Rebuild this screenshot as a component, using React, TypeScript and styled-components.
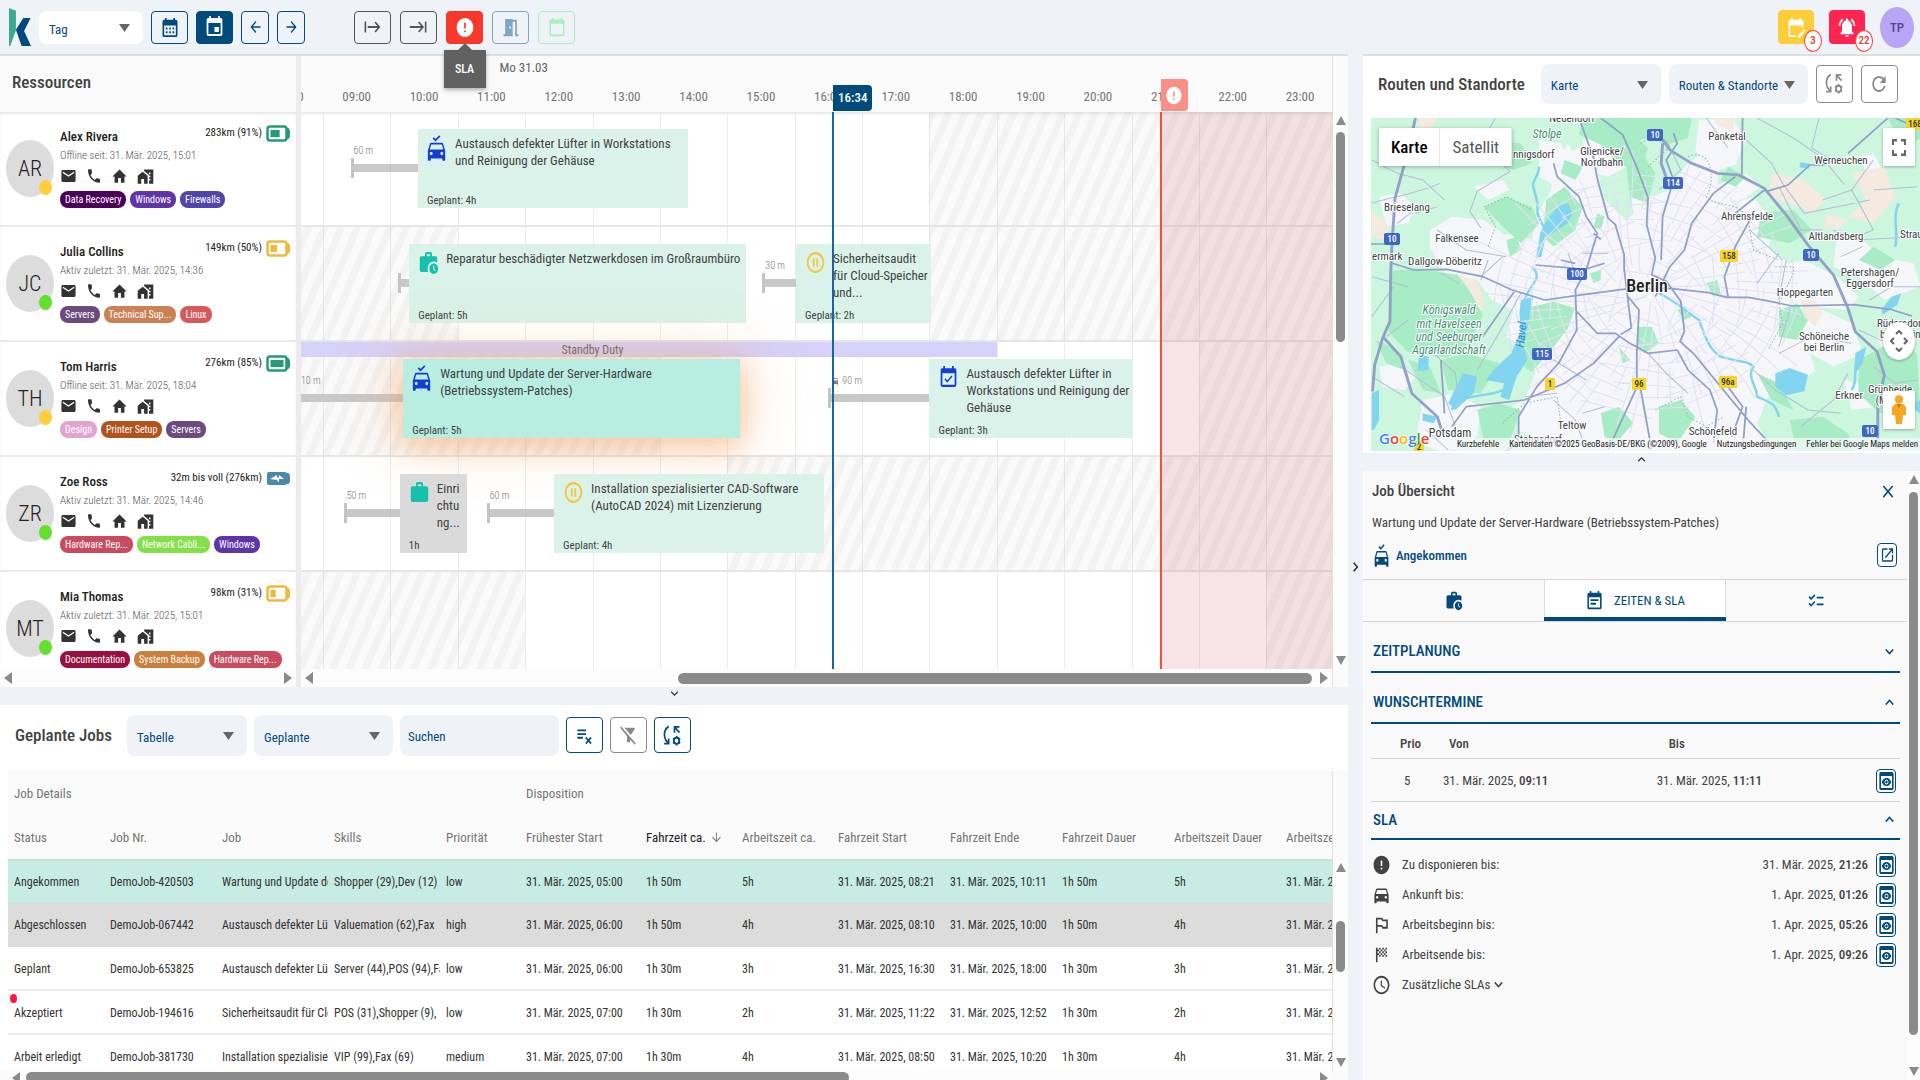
import React from 'react';
import styled, { createGlobalStyle, css } from 'styled-components';
import {
  MdAccessTime, MdArrowBack, MdArrowDownward, MdArrowForward, MdCalendarMonth, MdCalendarToday, MdChecklist,
  MdClose, MdDirectionsCar, MdEditCalendar, MdEmail, MdError, MdEvent, MdEventAvailable, MdEventNote, MdExpandLess,
  MdExpandMore, MdFilterAltOff, MdHome, MdHomeWork, MdKeyboardTab, MdChevronRight, MdMeetingRoom,
  MdNotificationsActive, MdOpenInNew, MdOutlinedFlag, MdPauseCircleOutline, MdPhone, MdPlaylistRemove, MdPreview,
  MdRefresh, MdSportsScore, MdStart, MdWork, MdWorkHistory, MdFullscreen,
} from 'react-icons/md';

/* ---------- tokens ---------- */
const navy = '#004a7c';
const shell = '#eff3f8';
const ink = '#424242';
const muted = '#757575';
const font = '"Roboto Condensed", Roboto, "Liberation Sans", sans-serif';

const Global = createGlobalStyle`
  *, *::before, *::after { box-sizing: border-box; }
  body { margin: 0; background: ${shell}; font-family: ${font}; font-size: 13px; color: ${ink}; }
  button, input, select { font: inherit; color: inherit; }
  h1, h2, h3, p, ul { margin: 0; padding: 0; }
  ul { list-style: none; }
`;

/* ---------- shell ---------- */
const Shell = styled.div`
  display: grid;
  grid-template-rows: 54px minmax(0, 1fr);
  height: 100vh;
  overflow: hidden;
`;
const TopBar = styled.header`
  display: flex;
  align-items: center;
  justify-content: space-between;
  padding: 0 6px 0 9px;
  background: ${shell};
  z-index: 5;
`;
const BarGroup = styled.div<{ $gap?: number }>`
  display: flex;
  align-items: center;
  gap: ${p => p.$gap ?? 9}px;
`;
const Main = styled.main`
  display: grid;
  grid-template-columns: minmax(0, 1348fr) 15px minmax(0, 557fr);
  min-height: 0;
`;
const LeftColumn = styled.div`
  display: grid;
  grid-template-rows: minmax(0, 633fr) 18px minmax(0, 375fr);
  min-height: 0;
`;
const RightColumn = styled.div`
  display: grid;
  grid-template-rows: minmax(0, 399fr) 18px minmax(0, 609fr);
  min-height: 0;
`;
const Splitter = styled.button<{ $row?: boolean }>`
  display: flex;
  align-items: center;
  justify-content: center;
  border: 0;
  padding: ${p => (p.$row ? '0 0 6px' : '0')};
  background: ${shell};
  color: #333;
`;

/* ---------- controls ---------- */
const IconButton = styled.button<{ $w?: number; $h?: number; $tone?: string; $fill?: string }>`
  position: relative;
  display: flex;
  align-items: center;
  justify-content: center;
  flex: none;
  width: ${p => p.$w ?? 37}px;
  height: ${p => p.$h ?? 33}px;
  padding: 0;
  border: 1px solid ${p => p.$fill ?? p.$tone ?? navy};
  border-radius: 4px;
  background: ${p => p.$fill ?? 'transparent'};
  color: ${p => (p.$fill ? '#fff' : p.$tone ?? navy)};
`;
const Tooltip = styled.span`
  position: absolute;
  top: 38px;
  left: 50%;
  width: 42px;
  margin-left: -21px;
  line-height: 38px;
  background: #616161;
  color: #fff;
  font-size: 12px;
  font-weight: 500;
  text-align: center;
  box-shadow: 0 2px 4px rgba(0, 0, 0, 0.3);
  &::before {
    content: '';
    position: absolute;
    left: 14px;
    top: -7px;
    border: 7px solid transparent;
    border-top: 0;
    border-bottom-color: #616161;
  }
`;
const Count = styled.span`
  position: absolute;
  right: -9px;
  bottom: -9px;
  width: 18px;
  height: 22px;
  border: 1px solid #f44336;
  border-radius: 50%;
  background: #fff;
  color: #e53935;
  font-size: 11px;
  font-weight: 500;
  line-height: 20px;
  text-align: center;
`;
const UserButton = styled.button`
  width: 34px;
  height: 41px;
  padding: 0;
  border: 0;
  border-radius: 50%;
  background: #b9a5f5;
  color: #5b4394;
  font-size: 13px;
  font-weight: 500;
`;
const SelectBox = styled.label<{ $w: number; $h: number; $bg?: string }>`
  position: relative;
  display: flex;
  flex: none;
  width: ${p => p.$w}px;
  height: ${p => p.$h}px;
  border-radius: 8px;
  background: ${p => p.$bg ?? shell};
  color: ${navy};
  svg { position: absolute; right: 13px; top: 50%; margin-top: -3px; pointer-events: none; }
`;
const NativeSelect = styled.select`
  appearance: none;
  width: 100%;
  border: 0;
  border-radius: 8px;
  padding: 4px 24px 0 10px;
  background: transparent;
  font-size: 13px;
`;
const SearchBox = styled.input`
  width: 159px;
  height: 41px;
  padding: 2px 8px 0;
  border: 0;
  border-radius: 8px;
  background: ${shell};
  &::placeholder { color: ${navy}; opacity: 1; }
`;
const Title = styled.h2<{ $size?: number }>`
  font-size: ${p => p.$size ?? 17}px;
  font-weight: 500;
  color: ${ink};
  white-space: nowrap;
`;

/* ---------- scroll bars ---------- */
const barTone = '#8a8a8a';
const Track = styled.div<{ $axis: 'x' | 'y' }>`
  display: flex;
  flex-direction: ${p => (p.$axis === 'x' ? 'row' : 'column')};
  align-items: center;
  min-width: 0;
  min-height: 0;
  background: #fcfcfc;
  ${p => p.$axis === 'x' ? css`height: 18px; padding: 0 4px;` : css`width: 100%; height: 100%; padding: 4px 0;`}
  svg { flex: none; }
`;
const Gap = styled.span<{ $grow: number }>`
  flex: ${p => p.$grow} 0 0;
`;
const Thumb = styled.span<{ $grow: number; $axis: 'x' | 'y' }>`
  flex: ${p => p.$grow} 0 0;
  border-radius: 6px;
  background: ${barTone};
  ${p => (p.$axis === 'x' ? css`height: 11px;` : css`width: 9px;`)}
`;
const arrows = { left: 'M8 0v12L0 6z', right: 'M0 0v12l8-6z', up: 'M0 9h10L5 0z', down: 'M0 0h10L5 9z' };
function ScrollArrow({ dir }: { dir: keyof typeof arrows }) {
  const wide = dir === 'up' || dir === 'down';
  return <svg width={wide ? 10 : 8} height={wide ? 9 : 12} fill={barTone}><path d={arrows[dir]} /></svg>;
}
function Bar({ axis, parts }: { axis: 'x' | 'y'; parts?: [number, number, number] }) {
  const p = parts ?? [1, 0, 0];
  return (
    <Track $axis={axis} aria-hidden>
      <ScrollArrow dir={axis === 'x' ? 'left' : 'up'} />
      <Gap $grow={p[0]} />
      {p[1] > 0 && <Thumb $axis={axis} $grow={p[1]} />}
      <Gap $grow={p[2]} />
      <ScrollArrow dir={axis === 'x' ? 'right' : 'down'} />
    </Track>
  );
}

/* ---------- icons ---------- */
type Glyph = React.ComponentType<any>;
function Icon({ as: G, w, h, color }: { as: Glyph; w: number; h: number; color?: string }) {
  return <G preserveAspectRatio="none" style={{ width: w, height: h, color, flex: 'none', display: 'block' }} />;
}
const CarCheck: Glyph = props => (
  <svg viewBox="0 0 24 30" fill="currentColor" {...props}>
    <path
      transform="translate(-2.6 2.5) scale(1.22 1.3)"
      fillRule="evenodd"
      d="M18.92 6.010C18.720 5.420 18.160 5 17.500 5h-11c-.66 0-1.210.42-1.420 1.010L3 12v8c0 .55.45 1 1 1h1c.55 0 1-.45 1-1v-1h12v1c0 .55.45 1 1 1h1c.55 0 1-.45 1-1v-8l-2.080-5.990zM6.500 16c-.83 0-1.500-.67-1.500-1.500S5.670 13 6.500 13s1.500.67 1.500 1.500S7.330 16 6.500 16zm11 0c-.83 0-1.500-.67-1.500-1.500s.67-1.500 1.500-1.500 1.500.67 1.500 1.500-.67 1.500-1.500 1.500zM5 11l1.500-4.500h11L19 11H5z"
    />
    <path d="M7.800 3.300l3 2.700 5.400-5" fill="none" stroke="currentColor" strokeWidth="2.200" />
  </svg>
);
const SyncSettings: Glyph = props => (
  <svg viewBox="0 0 24 24" fill="none" stroke="currentColor" strokeWidth="2" {...props}>
    <path d="M8 2.500C4 5 2.500 8.500 3 12.500c.3 3 1.800 5 4 7M2.500 20.500H8V15" />
    <path d="M15 9V3h6M15.500 3.500 21 9" />
    <circle cx="17.500" cy="17.500" r="3.200" />
    <path d="M17.500 12.500v2M17.500 20.500v2M13.200 15l1.700 1M20.100 19l1.700 1M13.200 20l1.700-1M20.100 16l1.700-1" />
  </svg>
);
const Caret = () => <svg width="11" height="8" fill="#666"><path d="M0 0h11L5.500 8z" /></svg>;
const Logo = () => (
  <svg width="22" height="38" viewBox="0 0 54 94" preserveAspectRatio="none" role="img" aria-label="k">
    <path d="M53 25H35L17 54l14 40h23L37 57z" fill={navy} />
    <path d="M0 0l17 7v48L3 94H0z" fill="#3fa98f" />
  </svg>
);
function Battery({ tone, level }: { tone: string; level: number }) {
  return (
    <svg width="24" height="17" viewBox="0 0 24 17" aria-hidden>
      <path d="M21 3h1.500l1.500 2.500v6l-1.500 2.500H21z" fill={tone} />
      {level < 0 ? (
        <>
          <rect x="1" y="2" width="20" height="13" rx="2" fill={tone} />
          <path d="M4 9l7-4v2.500h2V5l5 4h-5v3.500L11 10z" fill="#fff" />
        </>
      ) : (
        <>
          <rect x="1.500" y="1.500" width="19" height="14" rx="2.500" fill="#fff" stroke={tone} strokeWidth="2.500" />
          <rect x="4.500" y="5" width={13 * level} height="7" fill={tone} />
        </>
      )}
    </svg>
  );
}

/* ---------- resources ---------- */
const Planner = styled.section`
  display: grid;
  grid-template-columns: 296px 5px minmax(0, 1fr) 16px;
  min-height: 0;
  border-top: 2px solid #dcdfe3;
  background: #fff;
`;
const Pane = styled.div`
  display: grid;
  grid-template-rows: 56px minmax(0, 1fr) 18px;
  min-width: 0;
  min-height: 0;
`;
const PaneHead = styled.div`
  position: relative;
  display: flex;
  align-items: center;
  padding: 0 12px 4px;
  background: #fafafa;
  overflow: hidden;
`;
const PaneBody = styled.div`
  position: relative;
  overflow: hidden;
  box-shadow: inset 0 3px 3px -1px rgba(0, 0, 0, 0.1);
`;
const Divider = styled.div`
  background: #ececec;
`;
const ResourceRow = styled.li`
  display: flex;
  gap: 6px;
  height: 115px;
  padding: 16px 6px 0;
  border-bottom: 2px solid #ebebeb;
`;
const Avatar = styled.div`
  position: relative;
  flex: none;
  width: 48px;
  height: 57px;
  margin-top: 12px;
  border-radius: 50%;
  background: #dcdcdc;
  color: #222;
  font-size: 22px;
  font-weight: 300;
  line-height: 57px;
  text-align: center;
`;
const Presence = styled.span<{ $tone: string }>`
  position: absolute;
  right: 2px;
  bottom: 2px;
  width: 13px;
  height: 15px;
  border-radius: 50%;
  background: ${p => p.$tone};
`;
const Info = styled.div`
  flex: 1;
  min-width: 0;
`;
const NameLine = styled.div`
  display: flex;
  justify-content: space-between;
  height: 18px;
  line-height: 18px;
`;
const Name = styled.span`
  font-weight: 500;
  color: #212121;
`;
const Range = styled.span`
  display: flex;
  align-items: center;
  gap: 4px;
  height: 18px;
  margin-top: -4px;
  font-size: 11px;
  color: #212121;
`;
const Seen = styled.p`
  height: 19px;
  font-size: 11px;
  font-weight: 300;
  line-height: 19px;
  color: #555;
`;
const Contacts = styled.div`
  display: flex;
  align-items: center;
  gap: 9px;
  height: 22px;
`;
const Contact = styled.a`
  color: #333;
`;
const Chips = styled.ul`
  display: flex;
  gap: 4px;
  margin-top: 4px;
`;
const Chip = styled.li<{ $bg: string }>`
  height: 17px;
  padding: 0 5px;
  border-radius: 8px;
  background: ${p => p.$bg};
  color: #fff;
  font-size: 10px;
  line-height: 17px;
  white-space: nowrap;
`;

const online = '#62e02c';
const away = '#ffce3a';
const resources = [
  { id: 'AR', name: 'Alex Rivera', seen: 'Offline seit: 31. Mär. 2025, 15:01', dot: away, range: '283km (91%)', tone: '#229b76', level: 0.7,
    chips: [['Data Recovery', '#4a0057'], ['Windows', '#5e35a8'], ['Firewalls', '#5145ad']] },
  { id: 'JC', name: 'Julia Collins', seen: 'Aktiv zuletzt: 31. Mär. 2025, 14:36', dot: online, range: '149km (50%)', tone: '#efb93e', level: 0.5,
    chips: [['Servers', '#6b4a80'], ['Technical Sup...', '#cc8152'], ['Linux', '#d75a5a']] },
  { id: 'TH', name: 'Tom Harris', seen: 'Offline seit: 31. Mär. 2025, 18:04', dot: away, range: '276km (85%)', tone: '#229b76', level: 1,
    chips: [['Design', '#e2a3cf'], ['Printer Setup', '#b3521b'], ['Servers', '#6b4a80']] },
  { id: 'ZR', name: 'Zoe Ross', seen: 'Aktiv zuletzt: 31. Mär. 2025, 14:46', dot: online, range: '32m bis voll (276km)', tone: '#4c87ac', level: -1,
    chips: [['Hardware Rep...', '#c94b60'], ['Network Cabli...', '#84e04a'], ['Windows', '#5e35a8']] },
  { id: 'MT', name: 'Mia Thomas', seen: 'Aktiv zuletzt: 31. Mär. 2025, 15:01', dot: online, range: '98km (31%)', tone: '#efb93e', level: 0.4,
    chips: [['Documentation', '#990f3d'], ['System Backup', '#cc7f3c'], ['Hardware Rep...', '#c94b60']] },
];

function Resources() {
  return (
    <Pane>
      <PaneHead><Title>Ressourcen</Title></PaneHead>
      <PaneBody>
        <ul>
          {resources.map(r => (
            <ResourceRow key={r.id}>
              <Avatar>{r.id}<Presence $tone={r.dot} /></Avatar>
              <Info>
                <NameLine>
                  <Name>{r.name}</Name>
                  <Range>{r.range}<Battery tone={r.tone} level={r.level} /></Range>
                </NameLine>
                <Seen>{r.seen}</Seen>
                <Contacts>
                  <Contact href="#mail" aria-label="E-Mail"><Icon as={MdEmail} w={17} h={18} /></Contact>
                  <Contact href="#phone" aria-label="Telefon"><Icon as={MdPhone} w={16} h={18} /></Contact>
                  <Contact href="#home" aria-label="Zuhause"><Icon as={MdHome} w={17} h={19} /></Contact>
                  <Contact href="#site" aria-label="Standort"><Icon as={MdHomeWork} w={17} h={19} /></Contact>
                </Contacts>
                <Chips>{r.chips.map(([t, c]) => <Chip key={t} $bg={c}>{t}</Chip>)}</Chips>
              </Info>
            </ResourceRow>
          ))}
        </ul>
      </PaneBody>
      <Bar axis="x" />
    </Pane>
  );
}

/* ---------- timeline ---------- */
const DAY_START = 8.674;
const DAY_SPAN = 15.3;
const at = (h: number) => `${((h - DAY_START) / DAY_SPAN) * 100}%`;
const span = (h: number) => `${(h / DAY_SPAN) * 100}%`;

const DayLabel = styled.span`
  position: absolute;
  top: 4px;
  line-height: 16px;
  color: #616161;
`;
const HourLabel = styled.span`
  position: absolute;
  bottom: 7px;
  line-height: 16px;
  text-align: center;
  color: ${muted};
`;
const HourLine = styled.span`
  position: absolute;
  top: 0;
  bottom: 0;
  width: 1px;
  background: #ececec;
`;
const NowBadge = styled.span`
  position: absolute;
  bottom: 1px;
  height: 26px;
  padding: 0 5px;
  border-radius: 0 4px 4px 0;
  background: ${navy};
  color: #fff;
  font-weight: 500;
  line-height: 25px;
`;
const SlaBadge = styled.span`
  position: absolute;
  bottom: 1px;
  display: flex;
  align-items: center;
  justify-content: center;
  width: 27px;
  height: 32px;
  border-radius: 0 4px 4px 0;
  background: #f98f87;
`;
const Marker = styled.span<{ $tone: string; $w: number }>`
  position: absolute;
  top: 0;
  bottom: 0;
  width: ${p => p.$w}px;
  background: ${p => p.$tone};
  z-index: 2;
`;
const SlaZone = styled.span`
  position: absolute;
  top: 0;
  right: 0;
  bottom: 0;
  background: rgba(190, 50, 44, 0.13);
`;
const Lane = styled.div`
  position: relative;
  height: 115px;
  border-bottom: 2px solid #e6e6e6;
`;
const Blocked = styled.span`
  position: absolute;
  top: 0;
  bottom: 0;
  background: repeating-linear-gradient(113deg, rgba(160, 160, 160, 0.13) 0 7px, rgba(160, 160, 160, 0.05) 7px 15px);
`;
const Standby = styled.span`
  position: absolute;
  top: 0;
  height: 15px;
  background: #d6d1f9;
  color: #616161;
  font-size: 12px;
  line-height: 16px;
  text-align: center;
`;
const Travel = styled.span`
  position: absolute;
  top: 52px;
  height: 8px;
  background: #c8c8c8;
  &::before {
    content: '';
    position: absolute;
    left: 0;
    top: -6px;
    width: 3px;
    height: 20px;
    background: #c4c4c4;
  }
`;
const TravelLabel = styled.span`
  position: absolute;
  left: 3px;
  bottom: 14px;
  display: flex;
  align-items: center;
  gap: 3px;
  font-size: 10px;
  font-weight: 300;
  line-height: 14px;
  color: #777;
  white-space: nowrap;
`;
const Job = styled.article<{ $kind?: 'active' | 'done' }>`
  position: absolute;
  top: 17px;
  display: flex;
  flex-direction: column;
  justify-content: space-between;
  height: 79px;
  padding: 6px 0 0 9px;
  background: #daf2ea;
  color: #424242;
  ${p => p.$kind === 'done' && css`background: #dadada;`}
  ${p => p.$kind === 'active' && css`
    background: #b8ede2;
    box-shadow: 0 6px 30px 2px rgba(247, 156, 88, 0.5), 0 0 60px 8px rgba(247, 180, 120, 0.25);
  `}
`;
const JobHead = styled.div`
  display: grid;
  grid-template-columns: 20px 1fr;
  gap: 8px;
`;
const JobTitle = styled.h3`
  font-size: 13px;
  font-weight: 400;
  line-height: 17px;
  white-space: pre;
`;
const JobFoot = styled.p`
  font-size: 11px;
  line-height: 14px;
`;

type JobData = { at: number; h: number; title: string; foot: string; icon: Glyph; tone: string; kind?: 'active' | 'done'; travel: number; label?: string; car?: boolean };
const blue = '#123fd2';
const teal = '#17c0ab';
const amber = '#f5c638';
const lanes: { blocked: [number, number][]; standby?: [number, number]; jobs: JobData[] }[] = [
  { blocked: [[18, 24]], jobs: [
    { at: 10.41, h: 4, travel: 60, label: '60 m', icon: CarCheck, tone: blue, title: 'Austausch defekter Lüfter in Workstations\nund Reinigung der Gehäuse', foot: 'Geplant: 4h' }] },
  { blocked: [[8, 11], [18, 24]], jobs: [
    { at: 10.28, h: 5, travel: 10, icon: MdWorkHistory, tone: teal, title: 'Reparatur beschädigter Netzwerkdosen im Großraumbüro', foot: 'Geplant: 5h' },
    { at: 16.02, h: 2, travel: 30, label: '30 m', icon: MdPauseCircleOutline, tone: amber, title: 'Sicherheitsaudit\nfür Cloud-Speicher\nund...', foot: 'Geplant: 2h' }] },
  { blocked: [[8, 14], [22, 24]], standby: [7, 19], jobs: [
    { at: 10.19, h: 5, travel: 98, label: '110 m', kind: 'active', icon: CarCheck, tone: blue, title: 'Wartung und Update der Server-Hardware\n(Betriebssystem-Patches)', foot: 'Geplant: 5h' },
    { at: 18, h: 3, travel: 90, label: '90 m', car: true, icon: MdEventAvailable, tone: blue, title: 'Austausch defekter Lüfter in\nWorkstations und Reinigung der\nGehäuse', foot: 'Geplant: 3h' }] },
  { blocked: [[15, 24]], jobs: [
    { at: 10.14, h: 1, travel: 50, label: '50 m', kind: 'done', icon: MdWork, tone: teal, title: 'Einri\nchtu\nng...', foot: '1h' },
    { at: 12.43, h: 4, travel: 60, label: '60 m', icon: MdPauseCircleOutline, tone: amber, title: 'Installation spezialisierter CAD-Software\n(AutoCAD 2024) mit Lizenzierung', foot: 'Geplant: 4h' }] },
  { blocked: [[8, 12], [23, 24]], jobs: [] },
];
const hours = Array.from({ length: 16 }, (_, i) => i + 8);

function Timeline() {
  return (
    <Pane>
      <PaneHead>
        <DayLabel style={{ left: at(11.62) }}>Mo 31.03</DayLabel>
        {hours.map(h => (
          <HourLabel key={h} style={{ left: at(h), width: span(1) }}>{String(h).padStart(2, '0')}:00</HourLabel>
        ))}
        <NowBadge style={{ left: at(16.57) }}>16:34</NowBadge>
        <SlaBadge style={{ left: at(21.43) }}><Icon as={MdError} w={18} h={21} color="#fff" /></SlaBadge>
      </PaneHead>
      <PaneBody>
        {hours.map(h => <HourLine key={h} style={{ left: at(h) }} />)}
        {lanes.map((lane, i) => (
          <Lane key={i}>
            {lane.blocked.map(([a, b]) => <Blocked key={a} style={{ left: at(a), width: span(b - a) }} />)}
            {lane.standby && (
              <Standby style={{ left: at(lane.standby[0]), width: span(lane.standby[1] - lane.standby[0]) }}>Standby Duty</Standby>
            )}
            {lane.jobs.map(j => (
              <React.Fragment key={j.at}>
                <Travel style={{ left: at(j.at - j.travel / 60), width: span(j.travel / 60) }}>
                  {j.label && (
                    <TravelLabel>{j.car && <Icon as={MdDirectionsCar} w={8} h={10} />}{j.label}</TravelLabel>
                  )}
                </Travel>
                <Job $kind={j.kind} style={{ left: at(j.at), width: span(j.h) }}>
                  <JobHead>
                    <Icon as={j.icon} w={j.icon === CarCheck ? 19 : 21} h={j.icon === CarCheck ? 26 : 25} color={j.tone} />
                    <JobTitle>{j.title}</JobTitle>
                  </JobHead>
                  <JobFoot>{j.foot}</JobFoot>
                </Job>
              </React.Fragment>
            ))}
          </Lane>
        ))}
        <SlaZone style={{ left: at(21.43) }} />
        <Marker $tone="#1a659d" $w={2} style={{ left: at(16.56) }} />
        <Marker $tone="#f4503f" $w={2} style={{ left: at(21.42) }} />
      </PaneBody>
      <Bar axis="x" parts={[365, 634, 8]} />
    </Pane>
  );
}
const SideBar = styled.div<{ $head: number; $foot?: number }>`
  display: grid;
  grid-template-rows: ${p => p.$head}px minmax(0, 1fr) ${p => p.$foot ?? 0}px;
  border-left: 1px solid #dedede;
  background: #fafafa;
`;

/* ---------- job table ---------- */
const JobsPanel = styled.section`
  display: grid;
  grid-template-rows: 66px minmax(0, 1fr) 9px;
  min-height: 0;
  background: #fff;
`;
const JobsTools = styled.div`
  display: flex;
  align-items: center;
  height: 60px;
  padding-left: 15px;
  gap: 7px;
  h2 { margin-right: 8px; }
`;
const TableArea = styled.div`
  display: grid;
  grid-template-columns: minmax(0, 1fr) 16px;
  min-height: 0;
  padding-left: 8px;
`;
const TableView = styled.div`
  overflow: hidden;
`;
const Table = styled.table`
  width: 1392px;
  table-layout: fixed;
  border-collapse: separate;
  border-spacing: 0;
  text-align: left;
  white-space: nowrap;
  thead { background: #fafafa; }
`;
const Th = styled.th<{ $sorted?: boolean }>`
  height: 44px;
  padding: 0 0 0 6px;
  font-size: 13px;
  font-weight: 400;
  overflow: hidden;
  color: ${p => (p.$sorted ? '#212121' : muted)};
  span { display: inline-flex; align-items: center; gap: 4px; }
  svg { color: #888; }
`;
const Tr = styled.tr<{ $bg?: string }>`
  background: ${p => p.$bg ?? '#fff'};
  td { border-bottom: 2px solid ${p => p.$bg ?? '#ececec'}; }
  &:first-child td { border-top: 2px solid #c9dfd8; }
`;
const Td = styled.td`
  position: relative;
  height: 44px;
  padding: 2px 0 0 6px;
  font-size: 12px;
  color: #333;
  overflow: hidden;
`;
const Alert = styled.span`
  position: absolute;
  left: 2px;
  top: 3px;
  width: 7px;
  height: 9px;
  border-radius: 50%;
  background: #ff1744;
`;
const BottomBar = styled.div`
  overflow: hidden;
  padding: 0 16px 0 8px;
  background: #fafafa;
  > div { height: 11px; align-items: flex-start; padding-top: 1px; }
`;

const widths = [96, 112, 112, 112, 80, 120, 96, 96, 112, 112, 112, 112, 120];
const heads = ['Status', 'Job Nr.', 'Job', 'Skills', 'Priorität', 'Frühester Start', 'Fahrzeit ca.', 'Arbeitszeit ca.', 'Fahrzeit Start', 'Fahrzeit Ende', 'Fahrzeit Dauer', 'Arbeitszeit Dauer', 'Arbeitszeit Start'];
const d = '31. Mär. 2025, ';
const jobs = [
  { bg: '#c6ece3', cells: ['Angekommen', 'DemoJob-420503', 'Wartung und Update der', 'Shopper (29),Dev (12)', 'low', d + '05:00', '1h 50m', '5h', d + '08:21', d + '10:11', '1h 50m', '5h', d + '10:11'] },
  { bg: '#dcdcdc', cells: ['Abgeschlossen', 'DemoJob-067442', 'Austausch defekter Lüfter', 'Valuemation (62),Fax', 'high', d + '06:00', '1h 50m', '4h', d + '08:10', d + '10:00', '1h 50m', '4h', d + '10:00'] },
  { cells: ['Geplant', 'DemoJob-653825', 'Austausch defekter Lüfter', 'Server (44),POS (94),Fax', 'low', d + '06:00', '1h 30m', '3h', d + '16:30', d + '18:00', '1h 30m', '3h', d + '18:00'] },
  { alert: true, cells: ['Akzeptiert', 'DemoJob-194616', 'Sicherheitsaudit für Cloud', 'POS (31),Shopper (9),', 'low', d + '07:00', '1h 30m', '2h', d + '11:22', d + '12:52', '1h 30m', '2h', d + '12:52'] },
  { cells: ['Arbeit erledigt', 'DemoJob-381730', 'Installation spezialisierter', 'VIP (99),Fax (69)', 'medium', d + '07:00', '1h 30m', '4h', d + '08:50', d + '10:20', '1h 30m', '4h', d + '10:20'] },
];

function Select({ label, value, w, h, bg }: { label: string; value: string; w: number; h: number; bg?: string }) {
  return (
    <SelectBox $w={w} $h={h} $bg={bg}>
      <NativeSelect aria-label={label} defaultValue={value}><option>{value}</option></NativeSelect>
      <Caret />
    </SelectBox>
  );
}

function Jobs() {
  return (
    <JobsPanel>
      <JobsTools>
        <Title>Geplante Jobs</Title>
        <Select label="Ansicht" value="Tabelle" w={120} h={41} />
        <Select label="Filter" value="Geplante" w={139} h={41} />
        <SearchBox aria-label="Suchen" placeholder="Suchen" />
        <IconButton aria-label="Liste leeren" $h={36}><Icon as={MdPlaylistRemove} w={19} h={22} /></IconButton>
        <IconButton aria-label="Filter entfernen" $h={36} $tone="#8a8a8a"><Icon as={MdFilterAltOff} w={19} h={22} /></IconButton>
        <IconButton aria-label="Synchronisieren" $h={36}><Icon as={SyncSettings} w={20} h={23} /></IconButton>
      </JobsTools>
      <TableArea>
        <TableView>
          <Table>
            <colgroup>{widths.map((w, i) => <col key={i} style={{ width: w }} />)}</colgroup>
            <thead>
              <tr><Th colSpan={5}>Job Details</Th><Th colSpan={8}>Disposition</Th></tr>
              <tr>
                {heads.map((t, i) => (
                  <Th key={t} $sorted={i === 6}>{i === 6 ? <span>{t}<Icon as={MdArrowDownward} w={13} h={15} /></span> : t}</Th>
                ))}
              </tr>
            </thead>
            <tbody>
              {jobs.map(j => (
                <Tr key={j.cells[1]} $bg={j.bg}>
                  {j.cells.map((c, i) => <Td key={i}>{i === 0 && j.alert && <Alert />}{c}</Td>)}
                </Tr>
              ))}
            </tbody>
          </Table>
        </TableView>
        <SideBar $head={88}>
          <span />
          <Bar axis="y" parts={[48, 49, 84]} />
        </SideBar>
      </TableArea>
      <BottomBar><Bar axis="x" parts={[6, 822, 470]} /></BottomBar>
    </JobsPanel>
  );
}

/* ---------- map ---------- */
const MapPanel = styled.section`
  display: grid;
  grid-template-rows: 62px minmax(0, 1fr);
  min-height: 0;
  padding: 0 0 2px 8px;
  border-top: 2px solid #dcdfe3;
  background: #fff;
`;
const MapTools = styled.div`
  display: flex;
  align-items: center;
  gap: 8px;
  height: 55px;
  padding-left: 7px;
  h2 { margin-right: 8px; }
`;
const MapCanvas = styled.div`
  position: relative;
  overflow: hidden;
  background: #cdf6de;
  > svg { display: block; width: 100%; height: 100%; }
`;
const MapTypes = styled.div`
  position: absolute;
  left: 8px;
  top: 10px;
  display: flex;
  background: #fff;
  box-shadow: 0 1px 4px rgba(0, 0, 0, 0.3);
`;
const MapType = styled.button<{ $on?: boolean }>`
  height: 38px;
  padding: 0 12px;
  border: 0;
  border-right: 1px solid #e6e6e6;
  background: #fff;
  color: ${p => (p.$on ? '#000' : '#565656')};
  font-size: 17px;
  font-weight: ${p => (p.$on ? 500 : 400)};
`;
const MapButton = styled.button<{ $top: number; $round?: boolean }>`
  position: absolute;
  right: 5px;
  top: ${p => p.$top}px;
  display: flex;
  align-items: center;
  justify-content: center;
  width: 32px;
  height: 38px;
  padding: 0;
  border: 0;
  border-radius: ${p => (p.$round ? '50%' : '1px')};
  background: #fff;
  color: #666;
  box-shadow: 0 1px 3px rgba(0, 0, 0, 0.3);
`;
const MapFooter = styled.div`
  position: absolute;
  right: 0;
  bottom: 0;
  display: flex;
  gap: 10px;
  padding: 0 2px;
  background: rgba(245, 247, 247, 0.75);
  font-size: 9px;
  line-height: 13px;
  color: #222;
  white-space: nowrap;
  a { color: inherit; text-decoration: none; }
`;
const Google = styled.span`
  position: absolute;
  left: 8px;
  bottom: 2px;
  font-family: "Open Sans", sans-serif;
  font-size: 15px;
  font-weight: 600;
  line-height: 22px;
  text-shadow: 0 0 2px #fff, 0 0 2px #fff;
`;
const Letter = styled.span<{ $c: string }>`
  color: ${p => p.$c};
`;

const places: [string, number, number, ('start' | 'middle')?][] = [
  ['Neuendorf', 201, 4], ['nnigsdorf', 142, 40, 'start'], ['Glienicke/', 231, 37], ['Nordbahn', 231, 48], ['Panketal', 356, 22],
  ['Werneuchen', 470, 46], ['Brieselang', 36, 93], ['Falkensee', 86, 124], ['ermark', 1, 142, 'start'], ['Dallgow-Döberitz', 74, 147],
  ['Ahrensfelde', 376, 102], ['Altlandsberg', 465, 122], ['Strausberg', 529, 120, 'start'], ['Petershagen/', 499, 158], ['Eggersdorf', 499, 169],
  ['Hoppegarten', 434, 178], ['Rüdersdorf', 506, 209, 'start'], ['bei Berlin', 509, 220, 'start'], ['Schöneiche', 453, 222], ['bei Berlin', 453, 233],
  ['Erkner', 478, 281], ['Grünheide', 519, 275], ['(Mark)', 519, 286], ['Schönefeld', 342, 317], ['Teltow', 201, 311], ['Stahnsdorf', 167, 325],
];
const motorways: [string, number, number][] = [['10', 284, 17], ['114', 302, 65], ['10', 21, 121], ['100', 206, 156], ['10', 440, 137], ['115', 171, 236], ['10', 499, 313]];
const federal: [string, number, number][] = [['158', 358, 138], ['168', 544, 6], ['1', 179, 266], ['96', 268, 266], ['96a', 357, 264], ['2', 48, 329]];

/* pseudo-random street mesh inside the city ring */
const streets = Array.from({ length: 190 }, (_, i) => {
  const a = (i * 2.399963) % 6.283185;
  const r = 26 * Math.sqrt(i + 3);
  const x = 815 + Math.cos(a) * r * 1.15;
  const y = 880 + Math.sin(a) * r;
  const t = a + (i % 2 ? 0.15 : 1.65);
  const l = 45 + (i % 5) * 14;
  return `M${(x - Math.cos(t) * l).toFixed(0)} ${(y - Math.sin(t) * l).toFixed(0)}Q${(x + (i % 7) * 4 - 12).toFixed(0)} ${y.toFixed(0)} ${(x + Math.cos(t) * l).toFixed(0)} ${(y + Math.sin(t) * l).toFixed(0)}`;
}).join('');

function BerlinMap() {
  return (
    <svg viewBox="0 0 549 333" preserveAspectRatio="xMidYMid slice" fontFamily={font} fontSize="11">
      <g transform="translate(-21 -118) scale(.3635 .33333)">
        <rect x="50" y="350" width="1530" height="1010" fill="#ccf6dd" />
        {/* built-up area */}
        <path d="M600 430l30 60 50 20 20 90 60 60 20-20-10-90 60 40 50-20 40-70 60-50 40 30-10 70 40 60 60-20 60 90-20 60 70 60 20 90 50 60-30 90 20 70-60 60-70 20-30 80 30 60-20 60-90-20-60 40-100-30-90 30-70-50-90 30-80-60-90-40 20-90 30-80-20-70-60-40 20-80-60-30-40-60-90-20-30-60 60-60 40-20 60 30 60-10 50 20 20-90 30-50 20-90z" fill="#f6f6fa" />
        <path d="M520 420l60 10 30 70-40 60-50-30zM80 590l60-10 40 40-20 50-60 10zM220 690l60-40 90 10 60 50-20 70-110 10-80-40zM340 560l80-20 20 30-60 30zM960 360l90-6 40 60-30 80-60 20-50-60zM1000 560l90-40 40 40-50 40-70 10zM1040 620l90 0 30 60-60 30-60-20zM1160 800l90-20 90 50 60 60-30 40-110-10-80-30zM1200 960l100-30 80 40 30 90-80 40-80-50zM1340 700l70 20 50 50 90 20 20 70-100 40-60-60-80-40zM1400 470l40-10 20 40-40 20zM80 1100l60-10 40 40-30 40-60-10zM200 1200l90-20 70 40-10 90-80 50-90-30zM430 1230l80-50 90-10 110 30 60 60-30 90-120 20-80-30zM870 1250l90-30 110 60 20 80-160 0zM1360 1140l80 20 20 60-80 10zM1450 1010l70 30 30 90-60 10zM600 460l50-30 70 10 40 60-50 30-70-20zM240 940l40-20 20 30-30 20zM640 420l40-10 20 50-50 10z" fill="#f5f6fa" />
        {/* forests */}
        <path d="M116 812l70-6 110 18 40 60 30 60-40 90-60 40-110-20-50-60 4-100zM370 620l60-30 70 30 20 50-50 60-50-50zM500 920l60-15 60 20-20 60-50 70-50 60-30-20 10-90zM640 354l130 0 20 60 30 30-20 70-60-20-50-60-60-30zM770 354h170l-10 60-60 20-40-20-60 10zM760 500l50-30 30 50-20 90-50-20zM540 600l50-40 50 60-20 70-60 50-30-30zM250 1080l70-20 90 30-50 90-90-10zM70 1020l60 30 20 60-50-20zM160 1080l60 20 30 80-50-10zM1180 930l50-20 30 50-30 60-50-10zM1400 1080l100-60 60 40 8 160-110 20-60-60zM1210 1260l90-10 70 50 20 60-160 0zM1480 354l90 0 0 60-50 30zM1130 640l90-10 50 60-60 40-90-20zM850 1220l60-20 40 50-50 80-50-30zM690 1240l50-20 40 50-50 60-30-20zM350 1230l60-20 60 20-30 90-70 10zM790 980l40 0 20 50-40 30-20-20zM1440 740l60 40-40 30-60-30zM380 420l90 10 30 60-50 20-70-30zM740 1040l30 40-20 10zM1040 500l50 30-30 30-40-20zM590 480l50 20-20 40-40-20zM1120 1120l60 30 40 80-60-30zM430 720l30-10 10 40-30 20zM980 850l30-10 10 40-20 10zM680 640l20 10-10 40-20-10zM660 820l30-10 0 30-20 10zM900 930l20-10 20 30-20 10z" fill="#a8ecc5" />
        {/* farmland */}
        <path d="M60 630l50 50-20 40-30-10zM190 354h50l-20 30-30 0zM300 824l50 20 20 60-10 30-30-60zM1160 520l90 20 60 60-40 40-60-30-60-20zM1380 520l90-20 30 90-60 80-70-20 50-50zM1240 900l40 0 20 40-20 40-30-30zM1310 640l60 20-30 30-40-10zM1000 354h60l-10 40-40-20z" fill="#f5eadf" />
        {/* lakes and rivers */}
        <path d="M600 610l12 30-14 30-30 22-30 20-12 60-14-2 12-74 20-40 30-40zM470 900l34-10-10 60-16 90 10 40-30 50-20 70-24-10 10-40-50-10 20-30 50-50 26-70-4-50zM310 1120l40 10-10 50-50 50-20-20zM190 1060l26 10 0 40-30 4zM60 1180l20-10 0 90-14 30-6 0zM1170 1120l40-16 50 20-10 50-50 12-30-26zM1490 890l26-10-10 34-40 30-4-16zM1240 486l26 6-4 14-26-4zM1390 1060l30-20-10 50-20 30zM200 1240l40 10-10 20-30-8zM1540 1220l28-20v40z" fill="#82d5f0" />
        <path d="M520 500c0 30-20 40-16 60 8 30 14 50 12 70-4 30 30 50 14 70M500 800c40 40-20 60-20 110M850 880c40 20 70 50 110 80 20 60 30 90 60 110 60 20 70 10 90 30-20 30 10 60 10 90 40 20 50 20 60 60M440 1160c-60 40-130 10-160 70M1400 1060c-20 40 0 80-20 110M1510 610c-20 40 0 80-10 130" fill="none" stroke="#82d5f0" strokeWidth="7" />
        {/* streets */}
        <path d={streets} fill="none" stroke="#e0e3f0" strokeWidth="3" />
        <path d="M60 480l70 40 70 20 60 60M58 610c60-20 130-30 190-60M400 354c-20 40-40 70-20 100l60 60-90 60-20 60 30 50M180 640l60-20M130 670l70-60M240 690l80 60 110 20M380 780l-20 60M60 950l60-90M60 830l100 30M350 1110l60-110 60-120M250 820l50 30M360 830l60-60M870 420l40 90-60 60M980 354l60 90M1070 400l90 90 30 60 60 90 90-20 90-20M1120 354l100 60 80 60 60 80M1290 354l-20 90 60 40M1180 560l60 130 60 0M1330 690l60 30 170-10M1350 770l60-30M1100 690l90 90M1120 850l60-90M1200 780l-20 120M1210 930l-30 110M1180 1060l90-50 110 20M1110 1110l60 60 90 60 90 10M1240 1280l90-80 40-80M1430 900l60-40 80 0M1400 990l80 40 80-30M1440 1100l60 50 60-10M480 1190l90-10M560 1200l60 60 20 60M640 1240l60-20M820 1060l50 60 60 60M300 1210l-10-90-60-60M100 1010l60-50M60 1130l90 60M140 1100l120 90 30 90M210 1290l60 60M560 1080l90 60M1440 570l120-10M1380 570l60-90M1300 600l80-30 60 120-70 30M640 760h70M600 760l20 60" fill="none" stroke="#b4bfd8" strokeWidth="3" />
        <path d="M930 470c60-30 80 60 50 120 30 40 110 0 120 100l10 60 70 30M380 740l20-60-30-60 60-30 70 40M1170 800l50 0 0 20-40 90 10 60-40 80M420 1270l60-60 90-20 10 80M840 1230l70-40 20 60 50 30M960 1290l70-40M800 430l50-30 30 40-60 60" fill="none" stroke="#8bb5a0" strokeWidth="3" strokeDasharray="4 6" />
        {/* motorways and trunk roads */}
        <g fill="none" stroke="#92a1c8" strokeLinejoin="round">
          <path d="M180 354l-18 90-38 150-8 130-4 90-2 150-20 50-22 80-6 80M90 1010l50 60 30 110 70 70 18 60M860 420l20 30 60 40 70 30 60 5 70 40 60 80 60 90 70 90 40 100 20 70 60 60 20 70-18 90 0 130M860 430l-4 60 20 60" strokeWidth="8" />
          <path d="M116 790l60 20 90-2 100 22 80 40 90 30 90-14 140-20 120 0 100 12 50 14 60 0 60 12 60 14 170-4 100 14 60 20M630 354l40 120 10 60 30 120 20 20 24 90 0 40 10 90 10 90-30 20M560 490l10 40 60 60 20 60 30 50-30 110-30 60 4 120-50 100-60 70-50 90 0 80-60 40-100 110M690 354l60 50 40 100 30 90-4 80 24 100-10 50 40 20 40 60 10 90-12 30 40 40 90 120 60 80 60 70M890 400l10 30-30 50 20 60-30 110-4 130M1080 354l-2 170M1060 530l-60 50-60 90-20 80-40 50-40 90M1140 570l-80 70M1145 575l60-20 60-60 40 0M1370 460l110-106M1100 660l-40 80-30 90 10 60M1500 354l40 20M620 930l60 70 50 0 40 30 50 30 80-10 30 60 60 60 20 60-10 100M740 1010l-70 80-80 60-110 50-160 20-40 60M765 890l30 40-6 130 0 80M790 1160l-80 190M800 1170l30 180M1040 1160l40 60-30 90M1090 1220l-10 130M250 1080l10 160M455 870l-90 140M580 780l40 10M700 790l-60 20M510 795l110 10M670 700l20 18M58 732h56" strokeWidth="5" />
        </g>
      </g>
      <g fill="#3c4043" stroke="#fff" strokeWidth="2" paintOrder="stroke" textAnchor="middle">
        {places.map(([t, x, y, a], i) => <text key={i} x={x} y={y} textAnchor={a}>{t}</text>)}
        <text x="79" y="319" fontSize="12">Potsdam</text>
        <text x="276" y="174" fontSize="18" fontWeight="500" fill="#222">Berlin</text>
        <g fill="#3f8f74" fontStyle="italic" fontSize="12">
          <text x="176" y="20">Stolpe</text>
          <text x="78" y="196">Königswald</text>
          <text x="78" y="210">mit Havelseen</text>
          <text x="78" y="223">und Seeburger</text>
          <text x="78" y="236">Agrarlandschaft</text>
        </g>
        <text x="0" y="0" fontSize="12" fontStyle="italic" fill="#2a93b8" strokeWidth="0" transform="translate(154 217) rotate(-84)">Havel</text>
      </g>
      <g fontSize="9" fontWeight="500" textAnchor="middle">
        {motorways.map(([t, x, y], i) => (
          <g key={i}><rect x={x - 4 - t.length * 2} y={y - 6} width={8 + t.length * 4} height="12" rx="2" fill="#3f66c0" /><text x={x} y={y + 3} fill="#fff">{t}</text></g>
        ))}
        {federal.map(([t, x, y], i) => (
          <g key={i}><rect x={x - 3 - t.length * 2} y={y - 6} width={6 + t.length * 4} height="12" rx="1" fill="#f5d62e" /><text x={x} y={y + 3} fill="#333">{t}</text></g>
        ))}
      </g>
    </svg>
  );
}

function MapView() {
  return (
    <MapPanel>
      <MapTools>
        <Title>Routen und Standorte</Title>
        <Select label="Ansicht" value="Karte" w={120} h={40} />
        <Select label="Ebene" value="Routen &amp; Standorte" w={139} h={40} />
        <IconButton aria-label="Synchronisieren" $h={38} $tone="#8a8a8a"><Icon as={SyncSettings} w={20} h={23} /></IconButton>
        <IconButton aria-label="Neu laden" $h={38} $tone="#8a8a8a"><Icon as={MdRefresh} w={20} h={24} /></IconButton>
      </MapTools>
      <MapCanvas>
        <BerlinMap />
        <MapTypes><MapType $on>Karte</MapType><MapType>Satellit</MapType></MapTypes>
        <MapButton $top={10} aria-label="Vollbild"><Icon as={MdFullscreen} w={24} h={29} /></MapButton>
        <MapButton $top={204} $round aria-label="Kamera">
          <svg width="18" height="22" viewBox="0 0 18 22" fill="none" stroke="#666" strokeWidth="2"><path d="M6 4l3-3 3 3M6 18l3 3 3-3M4 8l-3 3 3 3M14 8l3 3-3 3" /></svg>
        </MapButton>
        <MapButton $top={273} aria-label="Street View">
          <svg width="14" height="30" viewBox="0 0 14 30" fill="#f5a623"><circle cx="7" cy="4.500" r="4.200" /><path d="M3 9h8l3 3v8h-3l-1 9H4l-1-9H0v-8z" /><path d="M5 9h4l-2 4z" fill="#c67c10" /></svg>
        </MapButton>
        <Google>
          <Letter $c="#4285f4">G</Letter><Letter $c="#ea4335">o</Letter><Letter $c="#fbbc05">o</Letter><Letter $c="#4285f4">g</Letter><Letter $c="#34a853">l</Letter><Letter $c="#ea4335">e</Letter>
        </Google>
        <MapFooter>
          <a href="#shortcuts">Kurzbefehle</a>
          <span>Kartendaten ©2025 GeoBasis-DE/BKG (©2009), Google</span>
          <a href="#terms">Nutzungsbedingungen</a>
          <a href="#report">Fehler bei Google Maps melden</a>
        </MapFooter>
      </MapCanvas>
    </MapPanel>
  );
}

/* ---------- job overview ---------- */
const Overview = styled.section`
  display: grid;
  grid-template-columns: minmax(0, 1fr) 13px;
  min-height: 0;
  background: #f9f9f9;
`;
const OverviewHead = styled.div`
  padding: 8px 10px 12px 9px;
`;
const Line = styled.div<{ $h: number; $mt?: number }>`
  display: flex;
  align-items: center;
  justify-content: space-between;
  height: ${p => p.$h}px;
  margin-top: ${p => p.$mt ?? 0}px;
`;
const PlainButton = styled.button`
  display: flex;
  padding: 0;
  border: 0;
  background: none;
  color: ${navy};
`;
const State = styled.span`
  display: flex;
  align-items: center;
  gap: 7px;
  padding-left: 2px;
  color: ${navy};
  font-weight: 500;
`;
const Tabs = styled.div`
  display: grid;
  grid-template-columns: repeat(3, 1fr);
  height: 43px;
  border: 1px solid #d6d6d6;
  border-width: 1px 0;
`;
const Tab = styled.button<{ $on?: boolean }>`
  display: flex;
  align-items: center;
  justify-content: center;
  gap: 10px;
  border: 0;
  padding: 0;
  background: ${p => (p.$on ? '#fff' : 'transparent')};
  box-shadow: ${p => (p.$on ? `inset 0 -4px ${navy}, inset 1px 0 #ddd, inset -1px 0 #ddd` : 'none')};
  color: ${navy};
  font-size: 13px;
`;
const Body = styled.div`
  padding: 0 7px 0 8px;
`;
const SectionHead = styled.button<{ $flush?: boolean }>`
  display: flex;
  align-items: center;
  justify-content: space-between;
  width: 100%;
  height: ${p => (p.$flush ? 38 : 42)}px;
  margin-top: ${p => (p.$flush ? 0 : 9)}px;
  padding: 0 2px;
  border: 0;
  border-bottom: 2px solid ${navy};
  background: none;
  color: ${navy};
  font-size: 15px;
  font-weight: 500;
`;
const Wishes = styled.table`
  width: 100%;
  table-layout: fixed;
  border-collapse: collapse;
  text-align: left;
  th, td { border-bottom: 1px solid #d3d3d3; padding: 0; font-weight: 400; }
  th { height: 34px; padding-top: 6px; font-weight: 500; }
  td { height: 43px; padding-top: 2px; }
  th:first-child { padding-left: 29px; }
  td:first-child { padding-left: 33px; }
  th:nth-child(2) { padding-left: 6px; }
  th:nth-child(3) { padding-left: 12px; }
  b { font-weight: 500; }
`;
const EyeButton = styled.button`
  display: flex;
  align-items: center;
  justify-content: center;
  width: 20px;
  height: 24px;
  padding: 0;
  border: 1px solid ${navy};
  border-radius: 4px;
  background: #fff;
  color: ${navy};
`;
const SlaList = styled.dl`
  margin: 10px 0 0;
`;
const SlaRow = styled.div`
  display: grid;
  grid-template-columns: 22px 1fr auto 20px;
  align-items: center;
  column-gap: 8px;
  height: 30px;
  padding: 0 4px 0 1px;
  dd, dt { margin: 0; }
  b { font-weight: 500; }
`;
const MoreButton = styled.button`
  display: flex;
  align-items: center;
  border: 0;
  padding: 0;
  background: none;
`;
const slas: [Glyph, string, string, string][] = [
  [MdError, 'Zu disponieren bis:', '31. Mär. 2025, ', '21:26'],
  [MdDirectionsCar, 'Ankunft bis:', '1. Apr. 2025, ', '01:26'],
  [MdOutlinedFlag, 'Arbeitsbeginn bis:', '1. Apr. 2025, ', '05:26'],
  [MdSportsScore, 'Arbeitsende bis:', '1. Apr. 2025, ', '09:26'],
];
const Eye = () => <EyeButton aria-label="Im Kalender zeigen"><Icon as={MdPreview} w={19} h={24} /></EyeButton>;

function JobOverview() {
  return (
    <Overview>
      <div>
        <OverviewHead>
          <Line $h={24}>
            <Title $size={15}>Job Übersicht</Title>
            <PlainButton aria-label="Schließen"><Icon as={MdClose} w={18} h={21} /></PlainButton>
          </Line>
          <Line $h={18} $mt={10}>Wartung und Update der Server-Hardware (Betriebssystem-Patches)</Line>
          <Line $h={24} $mt={12}>
            <State><Icon as={CarCheck} w={15} h={23} />Angekommen</State>
            <EyeButton aria-label="Job öffnen"><Icon as={MdOpenInNew} w={15} h={18} /></EyeButton>
          </Line>
        </OverviewHead>
        <Tabs role="tablist">
          <Tab role="tab" aria-label="Auftrag"><Icon as={MdWorkHistory} w={18} h={21} /></Tab>
          <Tab role="tab" aria-selected $on><Icon as={MdEventNote} w={19} h={22} />ZEITEN &amp; SLA</Tab>
          <Tab role="tab" aria-label="Aufgaben"><Icon as={MdChecklist} w={18} h={20} /></Tab>
        </Tabs>
        <Body>
          <SectionHead>ZEITPLANUNG<Icon as={MdExpandMore} w={17} h={19} /></SectionHead>
          <SectionHead>WUNSCHTERMINE<Icon as={MdExpandLess} w={17} h={19} /></SectionHead>
          <Wishes>
            <colgroup><col style={{ width: '13.6%' }} /><col style={{ width: '40.4%' }} /><col /><col style={{ width: '24px' }} /></colgroup>
            <thead><tr><th>Prio</th><th>Von</th><th>Bis</th><th aria-label="Aktion" /></tr></thead>
            <tbody>
              <tr><td>5</td><td>31. Mär. 2025, <b>09:11</b></td><td>31. Mär. 2025, <b>11:11</b></td><td><Eye /></td></tr>
            </tbody>
          </Wishes>
          <SectionHead $flush>SLA<Icon as={MdExpandLess} w={17} h={19} /></SectionHead>
          <SlaList>
            {slas.map(([g, t, a, b]) => (
              <SlaRow key={t}>
                <Icon as={g} w={19} h={22} />
                <dt>{t}</dt>
                <dd>{a}<b>{b}</b></dd>
                <Eye />
              </SlaRow>
            ))}
            <SlaRow>
              <Icon as={MdAccessTime} w={19} h={22} />
              <MoreButton>Zusätzliche SLAs<Icon as={MdExpandMore} w={17} h={19} /></MoreButton>
            </SlaRow>
          </SlaList>
        </Body>
      </div>
      <Bar axis="y" parts={[8, 541, 32]} />
    </Overview>
  );
}

/* ---------- app ---------- */
export default function App() {
  return (
    <Shell>
      <Global />
      <TopBar>
        <BarGroup $gap={49}>
          <BarGroup $gap={8}>
            <Logo />
            <Select label="Zeitraum" value="Tag" w={104} h={33} bg="#fff" />
            <IconButton aria-label="Monat"><Icon as={MdCalendarMonth} w={20} h={23} /></IconButton>
            <IconButton aria-label="Heute" $fill={navy}><Icon as={MdEvent} w={21} h={24} /></IconButton>
            <IconButton aria-label="Zurück" $w={28}><Icon as={MdArrowBack} w={15} h={18} /></IconButton>
            <IconButton aria-label="Vor" $w={28}><Icon as={MdArrowForward} w={15} h={18} /></IconButton>
          </BarGroup>
          <BarGroup>
            <IconButton aria-label="Start" $tone="#555"><Icon as={MdStart} w={19} h={22} /></IconButton>
            <IconButton aria-label="Ende" $tone="#555"><Icon as={MdKeyboardTab} w={19} h={22} /></IconButton>
            <IconButton $fill="#f9382c" aria-label="SLA"><Icon as={MdError} w={20} h={23} /><Tooltip>SLA</Tooltip></IconButton>
            <IconButton aria-label="Abwesenheit" $tone="#7fa5c0"><Icon as={MdMeetingRoom} w={20} h={23} /></IconButton>
            <IconButton aria-label="Termine" $tone="#a8f0c0"><Icon as={MdCalendarToday} w={18} h={20} /></IconButton>
          </BarGroup>
        </BarGroup>
        <BarGroup $gap={15}>
          <IconButton aria-label="Anfragen" $w={36} $h={34} $fill="#ffcd38"><Icon as={MdEditCalendar} w={20} h={23} /><Count>3</Count></IconButton>
          <IconButton aria-label="Hinweise" $w={36} $h={34} $fill="#ff2550"><Icon as={MdNotificationsActive} w={20} h={23} /><Count>22</Count></IconButton>
          <UserButton>TP</UserButton>
        </BarGroup>
      </TopBar>
      <Main>
        <LeftColumn>
          <Planner>
            <Resources />
            <Divider />
            <Timeline />
            <SideBar $head={56} $foot={18}>
              <span />
              <Bar axis="y" parts={[7, 208, 312]} />
            </SideBar>
          </Planner>
          <Splitter $row aria-label="Bereich einklappen"><Icon as={MdExpandMore} w={15} h={15} /></Splitter>
          <Jobs />
        </LeftColumn>
        <Splitter aria-label="Seitenleiste einklappen"><Icon as={MdChevronRight} w={17} h={20} /></Splitter>
        <RightColumn>
          <MapView />
          <Splitter $row aria-label="Karte einklappen"><Icon as={MdExpandLess} w={15} h={15} /></Splitter>
          <JobOverview />
        </RightColumn>
      </Main>
    </Shell>
  );
}
